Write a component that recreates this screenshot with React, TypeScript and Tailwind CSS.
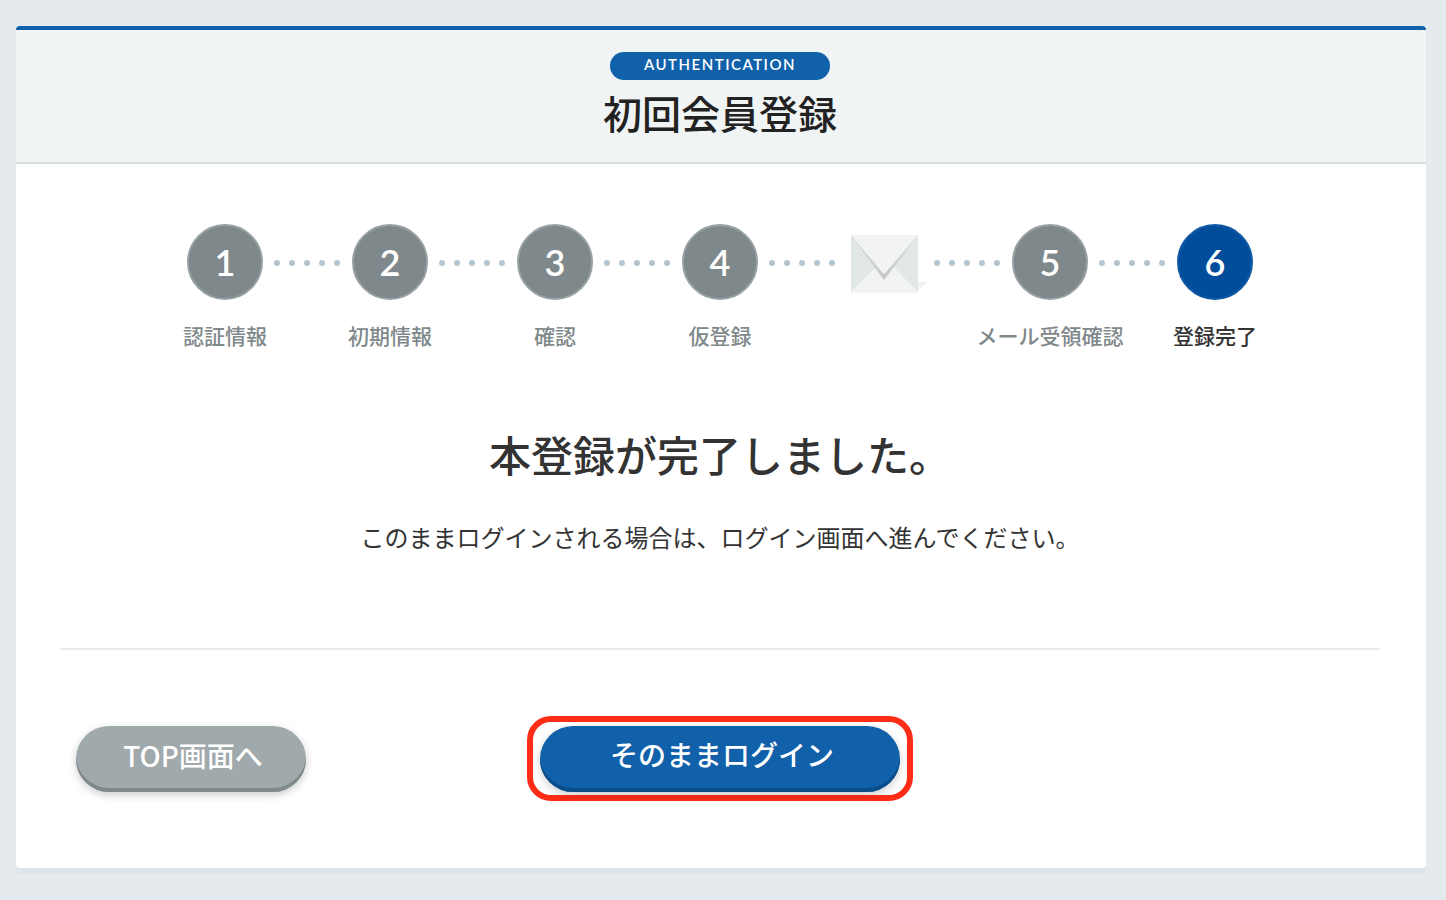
import { Fragment } from 'react';
import clsx from 'clsx';

type Step = {
  label: string;
  number?: number;
  current?: boolean;
};

const steps: Step[] = [
  { number: 1, label: '認証情報' },
  { number: 2, label: '初期情報' },
  { number: 3, label: '確認' },
  { number: 4, label: '仮登録' },
  { label: '' },
  { number: 5, label: 'メール受領確認' },
  { number: 6, label: '登録完了', current: true },
];

function MailIcon() {
  return (
    <svg width="78" height="60" viewBox="0 0 78 60" className="mt-[11px] ml-1 shrink-0" aria-hidden="true">
      <defs>
        <linearGradient id="flap-shadow" x1="0" y1="0" x2="0" y2="1">
          <stop offset="0" stopColor="#dfe2e2" />
          <stop offset="1" stopColor="#c4c6c7" />
        </linearGradient>
      </defs>
      <path d="M66 47 L77 47 L66 56 Z" fill="#f3f3f3" />
      <path d="M0 56 L66 56 L67 58 L0 58 Z" fill="#f6f6f6" />
      <rect x="0" y="0" width="67" height="57" fill="#e2e7e7" />
      <path d="M0 57 L25 32 L43 32 L67 57 Z" fill="#f2f3f5" />
      <path d="M0 1 L33 45 L67 1 Z" fill="url(#flap-shadow)" />
      <path d="M0 0 L67 0 L35 37 Q33 40 31 37 Z" fill="#f2f3f5" />
    </svg>
  );
}

function Connector() {
  return (
    <li aria-hidden="true" className="mt-9 flex w-[67px] shrink-0 justify-between pr-px">
      {[0, 1, 2, 3, 4].map((i) => (
        <span key={i} className="h-1.5 w-1.5 rounded-full bg-[#b3c5ce]" />
      ))}
    </li>
  );
}

function StepItem({ step }: { step: Step }) {
  if (!step.number) {
    return (
      <li className="flex w-[76px] shrink-0 justify-start">
        <MailIcon />
      </li>
    );
  }

  return (
    <li
      aria-current={step.current ? 'step' : undefined}
      className="flex w-[76px] shrink-0 flex-col items-center"
    >
      <span
        className={clsx(
          'flex h-[76px] w-[76px] items-center justify-center rounded-full border-2 text-4xl font-semibold text-white',
          step.current ? 'border-[#1159a5] bg-[#004d9b]' : 'border-[#98a1a3] bg-[#7f898b]'
        )}
      >
        {step.number}
      </span>
      <span
        className={clsx(
          'mt-5 text-[21px] leading-8 font-medium whitespace-nowrap',
          step.current ? 'text-[#333333]' : 'text-[#7f898b]'
        )}
      >
        {step.label}
      </span>
    </li>
  );
}

export default function App() {
  return (
    <div
      lang="ja"
      className="min-h-screen bg-[#e5eaee] pt-[26px] pr-5 pb-8 pl-4 font-['Lato','Noto_Sans_CJK_JP',sans-serif] text-[#333333]"
    >
      <div className="rounded-sm bg-white shadow-[0_6px_0_#dfe4e9]">
        <header className="flex flex-col items-center rounded-t-sm border-t-4 border-b-2 border-t-[#1060aa] border-b-[#d8dfe0] bg-[#f0f4f5] pt-[22px] pr-0.5 pb-5">
          <p className="h-7 w-[220px] rounded-full bg-[#1060aa] text-center text-[15px] leading-6 font-semibold tracking-widest text-white">
            AUTHENTICATION
          </p>
          <h1 className="mt-1.5 text-[39px] leading-[56px] font-medium text-[#222222]">初回会員登録</h1>
        </header>

        <main className="pt-[60px] pr-[46px] pb-[67px] pl-11">
          <ol className="flex justify-center gap-[11px]">
            {steps.map((step, i) => (
              <Fragment key={i}>
                {i > 0 && <Connector />}
                <StepItem step={step} />
              </Fragment>
            ))}
          </ol>

          <section className="mt-[72px] text-center">
            <h2 className="text-[42px] leading-[64px] font-medium">本登録が完了しました。</h2>
            <p className="mt-[30px] text-2xl leading-10">このままログインされる場合は、ログイン画面へ進んでください。</p>
          </section>

          <div className="mt-[90px] grid grid-cols-3 items-center border-t-2 border-[#e8ebec] pt-[66px]">
            <div className="pl-4">
              <button
                type="button"
                className="h-[66px] w-[230px] rounded-full bg-[#a0a9ab] pb-2 pl-1 font-['Noto_Sans_CJK_JP',sans-serif] text-[28px] font-medium text-white shadow-[inset_0_-4px_0_#7f898b,0_3px_8px_rgba(0,0,0,0.2)]"
              >
                TOP画面へ
              </button>
            </div>
            <div className="flex w-[386px] justify-center justify-self-center rounded-3xl border-6 border-[#ff2d16] pt-1 pb-[3px]">
              <button
                type="button"
                className="h-[66px] w-[360px] rounded-full bg-[#1060aa] pb-2 pl-1 text-[28px] font-medium text-white shadow-[inset_0_-4px_0_#0b4c8b,0_3px_8px_rgba(0,0,0,0.2)]"
              >
                そのままログイン
              </button>
            </div>
          </div>
        </main>
      </div>
    </div>
  );
}
